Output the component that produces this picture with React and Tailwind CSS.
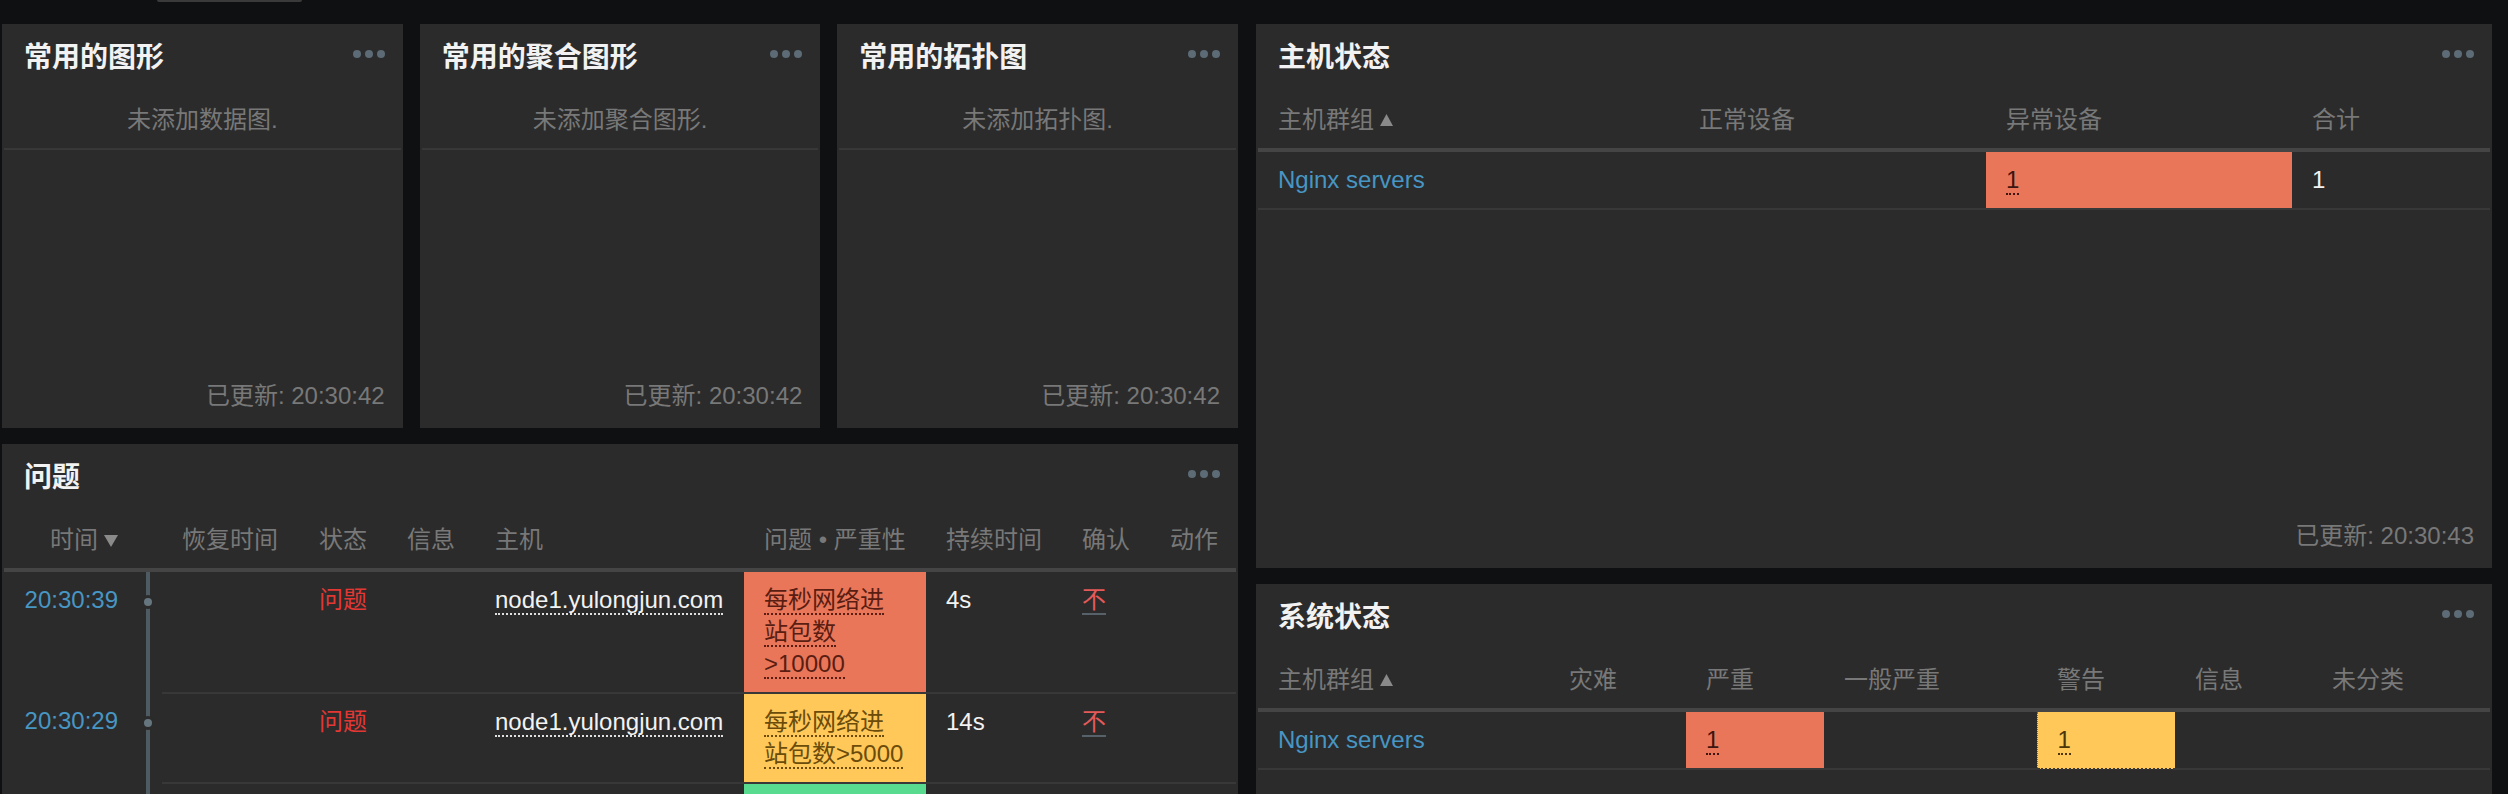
import React from "react";

function Dots() {
  return (
    <div className="flex gap-[4px] mt-[26px]">
      <span className="w-[8px] h-[8px] rounded-full bg-[#5c6b75]" />
      <span className="w-[8px] h-[8px] rounded-full bg-[#5c6b75]" />
      <span className="w-[8px] h-[8px] rounded-full bg-[#5c6b75]" />
    </div>
  );
}

function Panel({ title, children, className = "" }) {
  return (
    <div className={"bg-[#2b2b2b] flex flex-col overflow-hidden " + className}>
      <div className="flex justify-between h-[60px] shrink-0 pl-[22px] pr-[18px]">
        <h2 className="pt-[17px] text-[28px] leading-[34px] font-bold text-[#f2f2f2]">{title}</h2>
        <Dots />
      </div>
      {children}
    </div>
  );
}

function Updated({ time }) {
  return (
    <div className="text-right pr-[18px] pb-[16px] text-[24px] leading-[32px] text-[#787878]">
      已更新: {time}
    </div>
  );
}

function EmptyPanel({ title, msg }) {
  return (
    <Panel title={title} className="h-[404px]">
      <div className="mx-[2px] border-b-2 border-[#383838] pt-[20px] pb-[12px] text-center text-[24px] leading-[32px] text-[#787878]">
        {msg}
      </div>
      <div className="flex-1" />
      <Updated time="20:30:42" />
    </Panel>
  );
}

function UpTri() {
  return (
    <svg width="13" height="12" viewBox="0 0 13 12" className="inline-block ml-[6px] mb-[3px]">
      <path d="M6.5 0 L13 12 L0 12 Z" fill="#8a8a8a" />
    </svg>
  );
}
function DownTri() {
  return (
    <svg width="14" height="12" viewBox="0 0 14 12" className="inline-block ml-[6px] mb-[2px]">
      <path d="M0 0 L14 0 L7 12 Z" fill="#8a8a8a" />
    </svg>
  );
}

const th = "text-left font-normal pl-[20px] pt-[20px] pb-[12px] border-b-4 border-[#454545] text-[#787878] whitespace-nowrap";
const td = "pl-[20px] py-[12px] border-b-2 border-[#383838] align-top";

function HostStatus() {
  return (
    <Panel title="主机状态" className="h-[544px] shrink-0">
      <table className="mx-[2px] w-[1232px] table-fixed text-[24px] leading-[32px]">
        <colgroup>
          <col className="w-[421px]" />
          <col className="w-[307px]" />
          <col className="w-[306px]" />
          <col className="w-[198px]" />
        </colgroup>
        <thead>
          <tr>
            <th className={th}>主机群组<UpTri /></th>
            <th className={th}>正常设备</th>
            <th className={th}>异常设备</th>
            <th className={th}>合计</th>
          </tr>
        </thead>
        <tbody>
          <tr>
            <td className={td + " text-[#4796c4]"}>Nginx servers</td>
            <td className={td}></td>
            <td className={td + " bg-[#e97659] pl-[18px]"}>
              <span className="text-[#3d1510] border-b-2 border-dotted border-[#3d1510]">1</span>
            </td>
            <td className={td + " text-[#f2f2f2]"}>1</td>
          </tr>
        </tbody>
      </table>
      <div className="flex-1" />
      <Updated time="20:30:43" />
    </Panel>
  );
}

function SystemStatus() {
  return (
    <Panel title="系统状态" className="flex-1">
      <table className="mx-[2px] w-[1232px] table-fixed text-[24px] leading-[32px]">
        <colgroup>
          <col className="w-[291px]" />
          <col className="w-[137px]" />
          <col className="w-[138px]" />
          <col className="w-[213px]" />
          <col className="w-[138px]" />
          <col className="w-[137px]" />
          <col className="w-[178px]" />
        </colgroup>
        <thead>
          <tr>
            <th className={th}>主机群组<UpTri /></th>
            <th className={th}>灾难</th>
            <th className={th}>严重</th>
            <th className={th}>一般严重</th>
            <th className={th}>警告</th>
            <th className={th}>信息</th>
            <th className={th}>未分类</th>
          </tr>
        </thead>
        <tbody>
          <tr>
            <td className={td + " text-[#4796c4]"}>Nginx servers</td>
            <td className={td}></td>
            <td className={td + " bg-[#e97659] pl-[18px]"}>
              <span className="text-[#3d1510] border-b-2 border-dotted border-[#3d1510]">1</span>
            </td>
            <td className={td}></td>
            <td className={td + " bg-[#ffc859] pl-[18px] border-l border-l-[#8a6a20] border-dotted"}>
              <span className="text-[#4a3608] border-b-2 border-dotted border-[#4a3608]">1</span>
            </td>
            <td className={td}></td>
            <td className={td}></td>
          </tr>
        </tbody>
      </table>
    </Panel>
  );
}

function Timeline() {
  return (
    <td className="relative p-0">
      <div className="absolute top-0 bottom-0 left-[8px] w-[4px] bg-[#4f5b63]" />
      <div className="absolute top-[23px] left-[3px] w-[14px] h-[14px] rounded-full bg-[#66767f] border-[3px] border-[#2b2b2b]" />
    </td>
  );
}

const pth = "text-left font-normal pl-[20px] pt-[20px] pb-[12px] border-b-4 border-[#454545] text-[#787878] whitespace-nowrap";

function ProblemRow({ time, sev, text, dur, color, textColor }) {
  return (
    <tr>
      <td className="text-right pr-[20px] py-[12px] align-top text-[#4796c4]">{time}</td>
      <Timeline />
      <td className={td}></td>
      <td className={td + " text-[#e33734]"}>问题</td>
      <td className={td}></td>
      <td className={td + " text-[#f2f2f2]"}>
        <span className="border-b-2 border-dotted border-[#e0e0e0]">node1.yulongjun.com</span>
      </td>
      <td className={td + " pr-[20px] " + color}>
        <span className={"border-b-2 border-dotted " + textColor}>{text}</span>
      </td>
      <td className={td + " text-[#f2f2f2]"}>{dur}</td>
      <td className={td}>
        <span className="text-[#e45959] border-b-2 border-[#56616a]">不</span>
      </td>
      <td className={td}></td>
    </tr>
  );
}

function Problems() {
  return (
    <Panel title="问题" className="flex-1">
      <table className="mx-[2px] w-[1232px] table-fixed text-[24px] leading-[32px]">
        <colgroup>
          <col className="w-[134px]" />
          <col className="w-[24px]" />
          <col className="w-[137px]" />
          <col className="w-[88px]" />
          <col className="w-[88px]" />
          <col className="w-[269px]" />
          <col className="w-[182px]" />
          <col className="w-[136px]" />
          <col className="w-[88px]" />
          <col className="w-[86px]" />
        </colgroup>
        <thead>
          <tr>
            <th className={pth + " text-right! pl-0 pr-[20px]"}>时间<DownTri /></th>
            <th className="border-b-4 border-[#454545]"></th>
            <th className={pth}>恢复时间</th>
            <th className={pth}>状态</th>
            <th className={pth}>信息</th>
            <th className={pth}>主机</th>
            <th className={pth}>问题 • 严重性</th>
            <th className={pth}>持续时间</th>
            <th className={pth}>确认</th>
            <th className={pth}>动作</th>
          </tr>
        </thead>
        <tbody>
          <ProblemRow
            time="20:30:39"
            text="每秒网络进站包数>10000"
            dur="4s"
            color="bg-[#e97659]"
            textColor="text-[#5a1d12] border-[#5a1d12]"
          />
          <ProblemRow
            time="20:30:29"
            text="每秒网络进站包数>5000"
            dur="14s"
            color="bg-[#ffc859]"
            textColor="text-[#6b4c0a] border-[#6b4c0a]"
          />
          <tr>
            <td className="py-[12px] h-[120px]"></td>
            <td className="relative p-0">
              <div className="absolute top-0 bottom-0 left-[8px] w-[4px] bg-[#4f5b63]" />
            </td>
            <td className={td}></td>
            <td className={td}></td>
            <td className={td}></td>
            <td className={td}></td>
            <td className={td + " bg-[#59db8f]"}></td>
            <td className={td}></td>
            <td className={td}></td>
            <td className={td}></td>
          </tr>
        </tbody>
      </table>
    </Panel>
  );
}

export default function App() {
  return (
    <div className="w-[2508px] h-[794px] overflow-hidden bg-[#0e1012] font-['Liberation_Sans','Noto_Sans_CJK_SC',sans-serif]">
      <div className="h-[24px] pl-[157px]">
        <div className="w-[145px] h-[2px] rounded-b-[2px] bg-[#3a3a3a]" />
      </div>
      <div className="flex gap-[18px] pl-[2px] h-[770px]">
        <div className="w-[1236px] flex flex-col gap-[16px]">
          <div className="grid grid-cols-3 gap-x-[17px]">
            <EmptyPanel title="常用的图形" msg="未添加数据图." />
            <EmptyPanel title="常用的聚合图形" msg="未添加聚合图形." />
            <EmptyPanel title="常用的拓扑图" msg="未添加拓扑图." />
          </div>
          <Problems />
        </div>
        <div className="w-[1236px] flex flex-col gap-[16px]">
          <HostStatus />
          <SystemStatus />
        </div>
      </div>
    </div>
  );
}
